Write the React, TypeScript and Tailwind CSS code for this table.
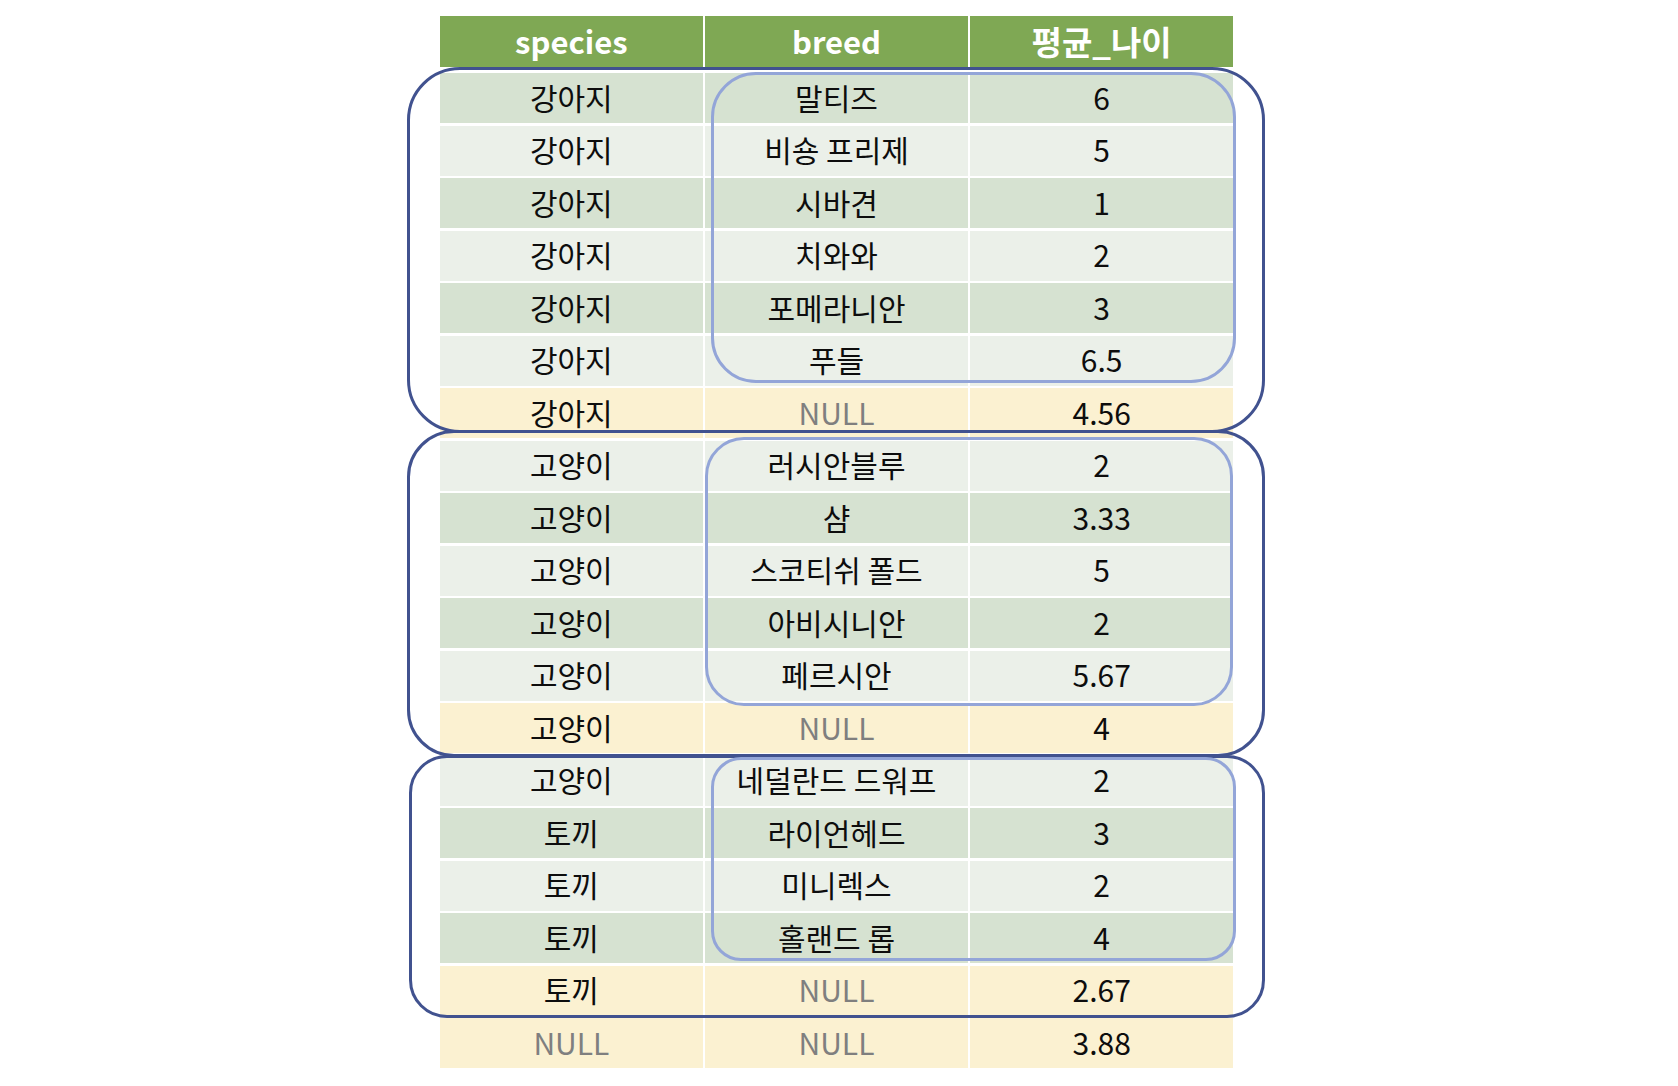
import React from 'react';

type Row = { species: string; breed: string; age: string; total?: boolean };

const rows: Row[] = [
  { species: '강아지', breed: '말티즈', age: '6' },
  { species: '강아지', breed: '비숑 프리제', age: '5' },
  { species: '강아지', breed: '시바견', age: '1' },
  { species: '강아지', breed: '치와와', age: '2' },
  { species: '강아지', breed: '포메라니안', age: '3' },
  { species: '강아지', breed: '푸들', age: '6.5' },
  { species: '강아지', breed: 'NULL', age: '4.56', total: true },
  { species: '고양이', breed: '러시안블루', age: '2' },
  { species: '고양이', breed: '샴', age: '3.33' },
  { species: '고양이', breed: '스코티쉬 폴드', age: '5' },
  { species: '고양이', breed: '아비시니안', age: '2' },
  { species: '고양이', breed: '페르시안', age: '5.67' },
  { species: '고양이', breed: 'NULL', age: '4', total: true },
  { species: '고양이', breed: '네덜란드 드워프', age: '2' },
  { species: '토끼', breed: '라이언헤드', age: '3' },
  { species: '토끼', breed: '미니렉스', age: '2' },
  { species: '토끼', breed: '홀랜드 롭', age: '4' },
  { species: '토끼', breed: 'NULL', age: '2.67', total: true },
  { species: 'NULL', breed: 'NULL', age: '3.88', total: true },
];

const headers = [
  { label: 'species', size: 'text-[31px]' },
  { label: 'breed', size: 'text-[31px]' },
  { label: '평균_나이', size: 'text-[33px]' },
];

function Cell({ value, bg }: { value: string; bg: string }) {
  const isNull = value === 'NULL';
  return (
    <div
      className={`h-[50px] pb-[3px] flex items-center justify-center ${bg} ${
        isNull ? 'text-[#7f7f7f]' : 'text-[#0d0d0d]'
      }`}
    >
      {value}
    </div>
  );
}

export default function App() {
  return (
    <div
      className="w-[1678px] h-[1086px] bg-white pt-[16px] pl-[440px] overflow-hidden"
      style={{ fontFamily: '"Noto Sans CJK KR", "Noto Sans", sans-serif' }}
    >
      <div className="relative w-[793px]">
        {/* header */}
        <div className="grid grid-cols-3 gap-x-[2.5px] mb-[6px]">
          {headers.map((h) => (
            <div
              key={h.label}
              className={`h-[51px] bg-[#7fa854] flex items-center justify-center text-white font-bold ${h.size}`}
            >
              {h.label}
            </div>
          ))}
        </div>

        {/* body */}
        <div className="grid grid-cols-3 gap-x-[2.5px] gap-y-[2.5px] text-[30px] leading-none">
          {rows.map((r, i) => {
            const bg = r.total ? 'bg-[#fbf1d1]' : i % 2 === 0 ? 'bg-[#d6e2d1]' : 'bg-[#ebf0e9]';
            return (
              <React.Fragment key={i}>
                <Cell value={r.species} bg={bg} />
                <Cell value={r.breed} bg={bg} />
                <Cell value={r.age} bg={bg} />
              </React.Fragment>
            );
          })}
        </div>

        {/* group outlines drawn over the table */}
        <div className="absolute left-[-33px] top-[51px] w-[858px] h-[366px] border-[3px] border-[#41528f] rounded-[53px] pointer-events-none" />
        <div className="absolute left-[-33px] top-[414px] w-[858px] h-[327px] border-[3px] border-[#41528f] rounded-[47px] pointer-events-none" />
        <div className="absolute left-[-31px] top-[739px] w-[856px] h-[263px] border-[3px] border-[#41528f] rounded-[38px] pointer-events-none" />

        <div className="absolute left-[271px] top-[56px] w-[525px] h-[311px] border-[3px] border-[#93a5d8] rounded-[45px] pointer-events-none" />
        <div className="absolute left-[265px] top-[421px] w-[528px] h-[269px] border-[3px] border-[#93a5d8] rounded-[39px] pointer-events-none" />
        <div className="absolute left-[271px] top-[741px] w-[525px] h-[204px] border-[3px] border-[#93a5d8] rounded-[30px] pointer-events-none" />
      </div>
    </div>
  );
}
